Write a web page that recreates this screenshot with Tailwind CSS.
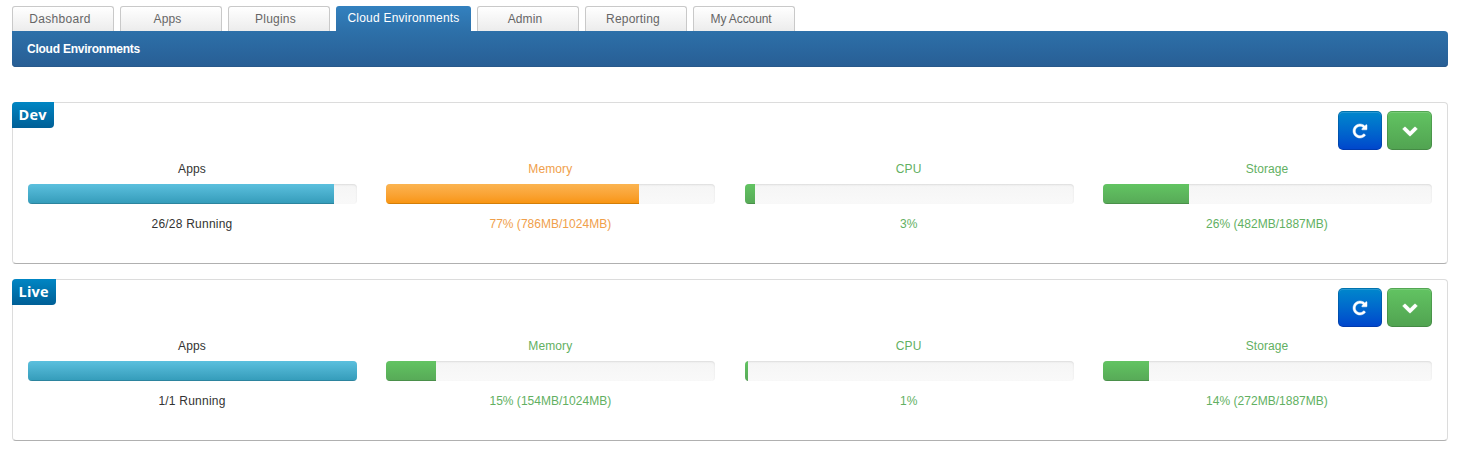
<!DOCTYPE html>
<html lang="en">
<head>
<meta charset="utf-8">
<title>Cloud Environments</title>
<script src="https://cdn.jsdelivr.net/npm/@tailwindcss/browser@4"></script>
</head>
<body class="h-[456px] overflow-hidden bg-white px-3 pt-1.5 pr-[13px] font-['Liberation_Sans',Arial,sans-serif] text-[12px] leading-5 text-[#333]">
<nav class="flex h-[25px] gap-1.5 text-center leading-[25px] tracking-[0.3px] text-[#666]">
  <a class="w-[102px] rounded-t-[3px] border border-b-0 border-[#c9c9c9] bg-linear-to-b from-white to-[#ececec] pr-[6px]">Dashboard</a>
  <a class="w-[102px] rounded-t-[3px] border border-b-0 border-[#c9c9c9] bg-linear-to-b from-white to-[#ececec] pr-[7px] tracking-[0.1px]">Apps</a>
  <a class="w-[102px] rounded-t-[3px] border border-b-0 border-[#c9c9c9] bg-linear-to-b from-white to-[#ececec] pr-[7px] tracking-[0.2px]">Plugins</a>
  <a class="w-[135px] rounded-t-[3px] bg-linear-to-b from-[#3381bf] to-[#2d70a9] leading-[24px] tracking-[0.23px] text-white">Cloud Environments</a>
  <a class="w-[102px] rounded-t-[3px] border border-b-0 border-[#c9c9c9] bg-linear-to-b from-white to-[#ececec] pr-[6px] tracking-[0.1px]">Admin</a>
  <a class="w-[102px] rounded-t-[3px] border border-b-0 border-[#c9c9c9] bg-linear-to-b from-white to-[#ececec] pr-[6px] tracking-[0.2px]">Reporting</a>
  <a class="w-[102px] rounded-t-[3px] border border-b-0 border-[#c9c9c9] bg-linear-to-b from-white to-[#ececec] pr-[6px] tracking-[-0.1px]">My Account</a>
</nav>
<header class="h-9 rounded-b-[4px] rounded-tr-[4px] bg-linear-to-b from-[#2d70a9] to-[#285e95] pl-[15px] font-bold leading-9 tracking-[-0.24px] text-white shadow-[inset_0_-1px_0_#28588a]">Cloud Environments</header>
<main id="environments" class="mt-[35px] flex flex-col gap-[15px]"></main>

<template id="panel">
  <section class="relative h-[162px] rounded-[4px] border border-[#dcdcdc] border-b-[#b0b0b0] px-[15px] pt-2">
    <h2 class="name absolute -left-px -top-px h-[26px] rounded-tl-[4px] rounded-br-[4px] bg-linear-to-b from-[#0086c4] to-[#005f96] pl-[6.5px] font-['Open_Sans',sans-serif] text-[14.5px] font-bold leading-[25px] tracking-[0.25px] text-white"></h2>
    <div class="flex justify-end gap-[5px]">
      <button class="flex h-[39px] w-11 items-center justify-center rounded-[5px] border border-black/15 bg-linear-to-b from-[#0088cc] to-[#0044cc] bg-origin-border shadow-[inset_0_1px_0_rgba(255,255,255,0.15)]" aria-label="Refresh">
        <svg class="mr-px h-[14px] w-[14px] overflow-visible" viewBox="0 0 1536 1536" fill="white" stroke="white" stroke-width="50"><path transform="translate(0 1408) scale(1 -1)" d="M1536 1280v-448q0 -26 -19 -45t-45 -19h-448q-42 0 -59 40q-17 39 14 69l138 138q-148 137 -349 137q-104 0 -198.5 -40.5t-163.5 -109.5t-109.5 -163.5t-40.5 -198.5t40.5 -198.5t109.5 -163.5t163.5 -109.5t198.5 -40.5q119 0 225 52t179 147q7 10 23 12q15 0 25 -9l137 -138q9 -8 9.5 -20.5t-7.5 -22.5q-109 -132 -264 -204.5t-327 -72.5q-156 0 -298 61t-245 164t-164 245t-61 298t61 298t164 245t245 164t298 61q147 0 284.5 -55.5t244.5 -156.5l130 129q29 31 70 14q39 -17 39 -59z"/></svg>
      </button>
      <button class="flex h-[39px] w-[45px] items-center justify-center rounded-[5px] border border-black/15 bg-linear-to-b from-[#62c462] to-[#51a351] bg-origin-border shadow-[inset_0_1px_0_rgba(255,255,255,0.15)]" aria-label="Expand">
        <svg class="mt-px h-[9px] w-[14px] overflow-visible" viewBox="90 -1003 1612 1035" fill="white" stroke="white" stroke-width="110" stroke-linejoin="round"><path transform="scale(1 -1)" d="M1683 728l-742 -741q-19 -19 -45 -19t-45 19l-742 741q-19 19 -19 45.5t19 45.5l166 165q19 19 45 19t45 -19l531 -531l531 531q19 19 45 19t45 -19l166 -165q19 -19 19 -45.5t-19 -45.5z"/></svg>
      </button>
    </div>
    <div class="metrics grid grid-cols-4 gap-x-[29.33px] pt-[9px] text-center"></div>
  </section>
</template>
<template id="metric">
  <div>
    <div class="label -ml-px tracking-[0.1px]"></div>
    <div class="mt-[5px] mb-[10px] h-5 overflow-hidden rounded-[4px] bg-linear-to-b from-[#f5f5f5] to-[#f9f9f9] shadow-[inset_0_1px_2px_rgba(0,0,0,0.1)]"><div class="bar h-full shadow-[inset_0_-1px_0_rgba(0,0,0,0.15)]"></div></div>
    <div class="value -ml-px"></div>
  </div>
</template>
<script>
const bars = {
  blue: 'bg-linear-to-b from-[#5bc0de] to-[#339bb9]',
  orange: 'bg-linear-to-b from-[#fbb450] to-[#f89406]',
  green: 'bg-linear-to-b from-[#62c462] to-[#57a957]'
};
const tones = { blue: 'text-[#333]', orange: 'text-[#f0a04b]', green: 'text-[#62b062]' };
const environments = [
  { name: 'Dev', width: 42, metrics: [
    ['Apps', '26/28 Running', 306, 'blue'], ['Memory', '77% (786MB/1024MB)', 253, 'orange'],
    ['CPU', '3%', 10, 'green'], ['Storage', '26% (482MB/1887MB)', 86, 'green']] },
  { name: 'Live', width: 44, metrics: [
    ['Apps', '1/1 Running', 329, 'blue'], ['Memory', '15% (154MB/1024MB)', 50, 'green'],
    ['CPU', '1%', 3, 'green'], ['Storage', '14% (272MB/1887MB)', 46, 'green']] }
];
for (const env of environments) {
  const panel = document.getElementById('panel').content.cloneNode(true);
  const name = panel.querySelector('.name');
  name.textContent = env.name;
  name.style.width = env.width + 'px';
  for (const [label, value, width, tone] of env.metrics) {
    const m = document.getElementById('metric').content.cloneNode(true);
    m.firstElementChild.className += ' ' + tones[tone];
    m.querySelector('.label').textContent = label;
    m.querySelector('.value').textContent = value;
    m.querySelector('.value').className += tone === 'blue' ? ' tracking-[0.22px]' : ' tracking-[0.02px]';
    const bar = m.querySelector('.bar');
    bar.className += ' ' + bars[tone];
    bar.style.width = width + 'px';
    panel.querySelector('.metrics').append(m);
  }
  document.getElementById('environments').append(panel);
}
</script>
</body>
</html>
